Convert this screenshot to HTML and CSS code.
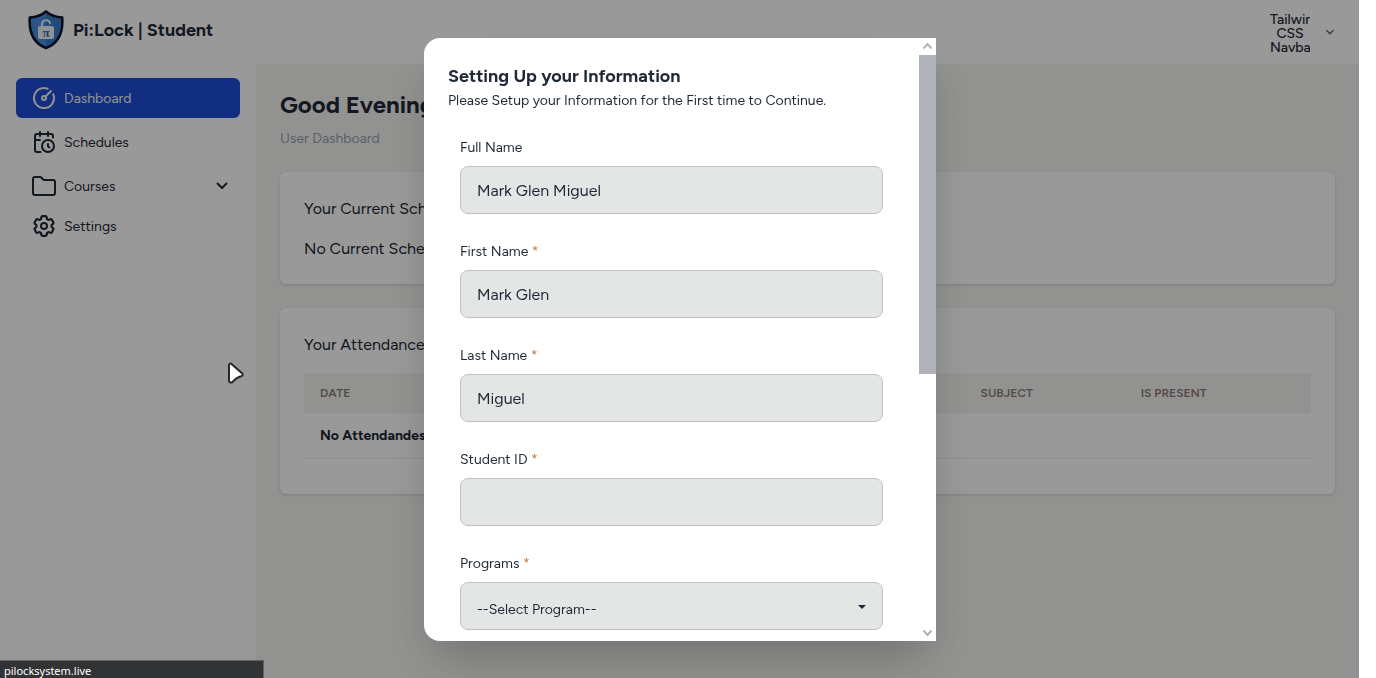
FILE: index.html
```html
<!DOCTYPE html>
<html lang="en">
<head>
<meta charset="utf-8">
<title>Pi:Lock | Student</title>
<link rel="stylesheet" href="styles.css">
</head>
<body>
<div class="page">
  <header class="topbar">
    <a class="brand" href="#">
      <svg class="brand-logo" viewBox="0 0 36 40" aria-hidden="true">
        <path d="M18 1.500C14 5 8.500 7.300 1.800 7.500C0.800 22 5 33 18 38C31 33 35.200 22 34.200 7.500C27.500 7.300 22 5 18 1.500Z" fill="#4590e0" stroke="#10152a" stroke-width="2.600" stroke-linejoin="round"/>
        <path d="M18 3.500V36.500C29.500 31.500 33.300 22 32.800 8.800C27 8.500 22 6.500 18 3.500Z" fill="#3a7cc9"/>
        <path d="M14 17V14.500C14 9 22 9 22 13.500" fill="none" stroke="#f0f6fb" stroke-width="2" stroke-linecap="round"/>
        <rect x="10" y="16" width="16" height="13" rx="2" fill="#f0f6fb"/>
        <text class="brand-pi" x="18" y="26.500" text-anchor="middle">π</text>
      </svg>
      <span>Pi:Lock | Student</span>
    </a>
    <button class="account" type="button">
      <span class="avatar">Tailwind CSS Navbar</span>
      <svg class="account-chevron" viewBox="0 0 10 10" aria-hidden="true"><path d="M1.500 3.200L5 6.700L8.500 3.200"/></svg>
    </button>
  </header>

  <nav class="sidebar">
    <a class="nav-item nav-item-active" href="#">
      <svg class="icon" viewBox="0 0 24 24" aria-hidden="true"><path d="M15.600 2.700A10 10 0 1 0 21.300 8.400"/><circle cx="12" cy="12" r="2"/><path d="M13.400 10.600L19 5"/></svg>
      Dashboard
    </a>
    <a class="nav-item" href="#">
      <svg class="icon" viewBox="0 0 24 24" aria-hidden="true"><path d="M21 7.500V6a2 2 0 0 0-2-2H5a2 2 0 0 0-2 2v14a2 2 0 0 0 2 2h3.500M16 2v4M8 2v4M3 10h5M17.500 17.500L16 16.300V14"/><circle cx="16" cy="16" r="6"/></svg>
      Schedules
    </a>
    <div class="nav-group">
      <a class="nav-item" href="#">
        <svg class="icon" viewBox="0 0 24 24" aria-hidden="true"><path d="M3 21h18a2 2 0 0 0 2-2V8a2 2 0 0 0-2-2h-8.500a2 2 0 0 1-1.600-.800L9.500 3.800A2 2 0 0 0 7.900 3H3a2 2 0 0 0-2 2v14a2 2 0 0 0 2 2Z"/></svg>
        Courses
        <svg class="nav-chevron" viewBox="0 0 12 12" aria-hidden="true"><path d="M1.500 3.500L6 8L10.500 3.500"/></svg>
      </a>
      <a class="nav-item" href="#">
        <svg class="icon" viewBox="0 0 24 24" aria-hidden="true"><path d="M9.594 3.940c.09-.542.560-.940 1.110-.940h2.593c.55 0 1.020.398 1.110.940l.213 1.281c.063.374.313.686.645.870.074.040.147.083.220.127.325.196.720.257 1.075.124l1.217-.456a1.125 1.125 0 0 1 1.370.490l1.296 2.247a1.125 1.125 0 0 1-.260 1.431l-1.003.827c-.293.241-.438.613-.430.992a7.700 7.700 0 0 1 0 .255c-.008.378.137.750.430.991l1.004.827c.424.350.534.955.260 1.430l-1.298 2.247a1.125 1.125 0 0 1-1.369.491l-1.217-.456c-.355-.133-.750-.072-1.076.124a6.500 6.500 0 0 1-.220.128c-.331.183-.581.495-.644.869l-.213 1.281c-.09.543-.560.940-1.110.940h-2.594c-.55 0-1.019-.398-1.110-.940l-.213-1.281c-.062-.374-.312-.686-.644-.870a6.500 6.500 0 0 1-.220-.127c-.325-.196-.720-.257-1.076-.124l-1.217.456a1.125 1.125 0 0 1-1.369-.490l-1.297-2.247a1.125 1.125 0 0 1 .260-1.431l1.004-.827c.292-.240.437-.613.430-.991a7 7 0 0 1 0-.255c.007-.380-.138-.751-.430-.992l-1.004-.827a1.125 1.125 0 0 1-.260-1.430l1.297-2.247a1.125 1.125 0 0 1 1.370-.491l1.216.456c.356.133.751.072 1.076-.124.072-.044.146-.086.220-.128.332-.183.582-.495.644-.869z" transform="translate(-1.200 -1.200) scale(1.100)"/><circle cx="12" cy="12" r="3"/></svg>
        Settings
      </a>
    </div>
  </nav>

  <main class="content">
    <h1 class="greeting">Good Evening</h1>
    <p class="crumb">User Dashboard</p>

    <section class="card">
      <h2 class="card-title">Your Current Schedule</h2>
      <p class="card-text">No Current Schedule</p>
    </section>

    <section class="card">
      <h2 class="card-title">Your Attendance</h2>
      <table class="attendance">
        <thead>
          <tr><th class="col-date">Date</th><th class="col-subject">Subject</th><th>Is present</th></tr>
        </thead>
        <tbody>
          <tr><td colspan="3">No Attendandes</td></tr>
        </tbody>
      </table>
    </section>
  </main>
</div>

<div class="overlay">
  <div class="modal" role="dialog" aria-labelledby="modal-title">
    <div class="modal-body">
      <h2 class="modal-title" id="modal-title">Setting Up your Information</h2>
      <p class="modal-text">Please Setup your Information for the First time to Continue.</p>
      <form class="form">
        <div class="field">
          <label for="full-name">Full Name</label>
          <input id="full-name" type="text" value="Mark Glen Miguel">
        </div>
        <div class="field">
          <label for="first-name">First Name <span class="required">*</span></label>
          <input id="first-name" type="text" value="Mark Glen">
        </div>
        <div class="field">
          <label for="last-name">Last Name <span class="required">*</span></label>
          <input id="last-name" type="text" value="Miguel">
        </div>
        <div class="field">
          <label for="student-id">Student ID <span class="required">*</span></label>
          <input id="student-id" type="text">
        </div>
        <div class="field">
          <label for="program">Programs <span class="required">*</span></label>
          <div class="select-wrap">
            <select id="program"><option>--Select Program--</option></select>
            <svg class="select-arrow" viewBox="0 0 8 4" aria-hidden="true"><path d="M0 0H8L4 4Z"/></svg>
          </div>
        </div>
      </form>
    </div>
    <div class="scrollbar" aria-hidden="true">
      <svg class="scroll-arrow" viewBox="0 0 17 17"><path d="M4.500 10.500L8.500 6L12.500 10.500"/></svg>
      <div class="scroll-track"><div class="scroll-thumb"></div></div>
      <svg class="scroll-arrow" viewBox="0 0 17 17"><path d="M4.500 6.500L8.500 11L12.500 6.500"/></svg>
    </div>
  </div>
</div>

<div class="status">pilocksystem.live</div>
<svg class="cursor" viewBox="0 0 18 23" aria-hidden="true"><path d="M2 3.200C2 1.500 3.600 1 4.800 2.200L15 11.200C16.200 12.400 15.800 13.800 14.200 14.200C10.500 15 8.500 16.500 5.800 19.700C4.400 21.200 2 20.800 2 18.800Z"/></svg>
</body>
</html>
```

FILE: styles.css
```css
* {
  box-sizing: border-box;
}

body {
  margin: 0;
  background: #fff;
  color: #1f2937;
  font-family: Figtree, Roboto, "Liberation Sans", sans-serif;
  font-size: 14px;
  line-height: 21px;
}

h1, h2, p {
  margin: 0;
}

a {
  color: inherit;
  text-decoration: none;
}

.page {
  display: grid;
  grid-template-columns: 256px 1fr;
  grid-template-rows: 64px 1fr;
  min-height: 100vh;
  margin-right: 17px;
}

/* Top bar */

.topbar {
  grid-column: 1 / -1;
  display: flex;
  align-items: center;
  justify-content: space-between;
  padding: 0 24px 0 28px;
}

.brand {
  display: flex;
  align-items: center;
  gap: 9px;
  font-size: 18px;
  font-weight: 700;
  line-height: 28px;
  padding-bottom: 5px;
}

.brand-logo {
  width: 36px;
  height: 40px;
}

.brand-pi {
  font: bold 13px "Liberation Serif", serif;
  fill: #2f6fb8;
}

.account {
  display: flex;
  align-items: center;
  gap: 15px;
  border: 0;
  padding: 0;
  background: none;
  color: inherit;
  font: inherit;
}

.avatar {
  width: 40px;
  padding-top: 4px;
  overflow: hidden;
  font-size: 14px;
  font-weight: 500;
  line-height: 14px;
}

.account-chevron {
  width: 10px;
  height: 10px;
  fill: none;
  stroke: #6b6b70;
  stroke-width: 1.5;
}

/* Sidebar */

.sidebar {
  display: flex;
  flex-direction: column;
  gap: 4px;
  padding: 14px 16px;
}

.nav-item {
  display: flex;
  align-items: center;
  gap: 8px;
  height: 40px;
  padding: 0 12px 0 16px;
  border-radius: 6px;
}

.nav-item-active {
  background: #1d4ed8;
  color: #f3f4f6;
}

.icon {
  width: 24px;
  height: 24px;
  fill: none;
  stroke: currentColor;
  stroke-width: 2;
  stroke-linecap: round;
  stroke-linejoin: round;
}

.nav-chevron {
  width: 12px;
  height: 12px;
  margin-left: auto;
  fill: none;
  stroke: currentColor;
  stroke-width: 2;
  stroke-linecap: round;
  stroke-linejoin: round;
}

/* Dashboard */

.content {
  display: flex;
  flex-direction: column;
  padding: 25px 24px 24px;
  background: #f3f3f0;
}

.greeting {
  font-size: 24px;
  font-weight: 700;
  line-height: 32px;
}

.crumb {
  margin-top: 7px;
  color: #94a3b8;
}

.card {
  margin-top: 24px;
  padding: 25px 24px 23px;
  border-radius: 6px;
  background: #fff;
  box-shadow: 0 1px 3px rgba(0, 0, 0, 0.15);
}

.crumb + .card {
  margin-top: 23px;
}

.card-title,
.card-text {
  font-size: 16px;
  font-weight: 400;
  line-height: 24px;
}

.card-title {
  margin-bottom: 16px;
}

.attendance {
  width: 100%;
  margin-bottom: 12px;
  border-collapse: collapse;
  table-layout: fixed;
  text-align: left;
}

.attendance th {
  height: 40px;
  padding: 0 16px;
  background: #f3f3f0;
  color: #8c7b7b;
  font-size: 12px;
  font-weight: 600;
  line-height: 16px;
  text-transform: uppercase;
}

.attendance td {
  height: 45px;
  padding: 0 16px;
  border-bottom: 1px solid #efefef;
  font-weight: 700;
}

.col-date {
  width: 65.6%;
}

.col-subject {
  width: 15.9%;
}

/* Modal */

.overlay {
  position: fixed;
  inset: 0 17px 0 0;
  display: flex;
  align-items: center;
  justify-content: center;
  padding: 1px 0 0 1px;
  background: rgba(0, 0, 0, 0.4);
}

.modal {
  display: flex;
  width: 100%;
  max-width: 512px;
  max-height: calc(100vh - 75px);
  overflow: hidden;
  border-radius: 16px 0 0 16px;
  background: #fff;
  box-shadow: 0 25px 50px -12px rgba(0, 0, 0, 0.25);
}

.modal-body {
  flex: 1;
  padding: 24px 24px 12px;
  overflow: hidden;
}

.modal-title {
  font-size: 18px;
  font-weight: 700;
  line-height: 28px;
}

.form {
  display: flex;
  flex-direction: column;
  gap: 20px;
  padding: 19px 12px 0;
}

.field {
  display: flex;
  flex-direction: column;
}

.field label {
  padding: 7px 0 8px;
}

.required {
  color: #c2763a;
}

.field input,
.field select {
  width: 100%;
  height: 48px;
  padding: 0 16px;
  border: 1px solid #bfc2c2;
  border-radius: 8px;
  background: #e4e6e5;
  color: inherit;
  font: inherit;
}

.field input {
  font-size: 16px;
}

.field select {
  appearance: none;
  padding-top: 6px;
}

.select-wrap {
  position: relative;
}

.select-arrow {
  position: absolute;
  top: 23px;
  right: 17px;
  width: 8px;
  height: 4px;
  fill: #1f2937;
}

.scrollbar {
  display: flex;
  flex-direction: column;
  width: 17px;
}

.scroll-arrow {
  width: 17px;
  height: 17px;
  fill: none;
  stroke: #b0b3b8;
  stroke-width: 2;
}

.scroll-track {
  flex: 1;
}

.scroll-thumb {
  height: 56%;
  background: #afb3b9;
}

/* Browser chrome over the page */

.status {
  position: fixed;
  left: 0;
  bottom: 0;
  width: 264px;
  padding: 3px 4px 0;
  border-top: 1px solid #606163;
  border-right: 1px solid #606163;
  background: #323335;
  color: #fff;
  font-family: "Noto Sans", "Open Sans", sans-serif;
  font-size: 11px;
  line-height: 14px;
}

.cursor {
  position: fixed;
  left: 227px;
  top: 362px;
  width: 18px;
  height: 23px;
  fill: #fff;
  stroke: #26262a;
  stroke-width: 2;
}
```
